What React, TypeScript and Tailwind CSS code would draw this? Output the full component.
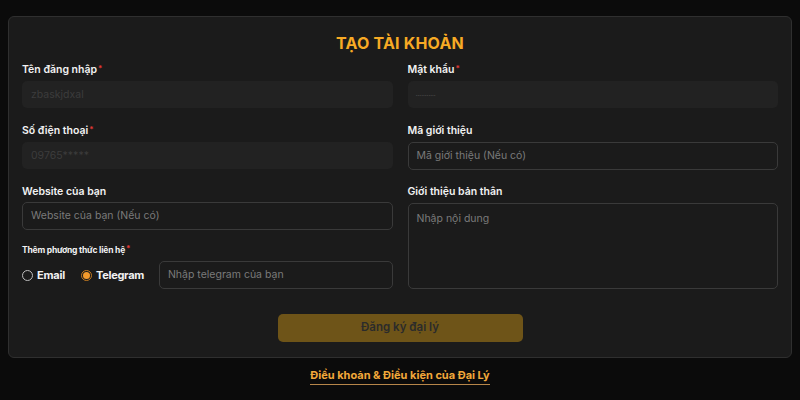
import React from "react";

const Req = () => <span className="text-[#e53935] text-[8px] align-top relative -top-[2px] ml-[1px]">*</span>;

function Label({ children, req, small, mb = 4 }: { children: React.ReactNode; req?: boolean; small?: boolean; mb?: number }) {
  return (
    <div
      className={`${small ? "text-[8.5px] tracking-[-0.2px] font-bold h-[14px] leading-[14px]" : "text-[10.5px] font-semibold h-[14px] leading-[14px]"} text-[#f2f2f2] ${mb === 3 ? "mb-[3px]" : "mb-[4px]"}`}
    >
      {children}
      {req && <Req />}
    </div>
  );
}

function Disabled({ text }: { text: string }) {
  return (
    <div className="h-[27px] rounded-[5px] bg-[#222222] flex items-center px-[9px] text-[10.5px] text-[#3c3c3c]">
      {text}
    </div>
  );
}

function Input({ placeholder }: { placeholder: string }) {
  return (
    <div className="h-[28px] rounded-[5px] border border-[#3a3a3a] bg-[#1b1b1b] flex items-center px-[8px] text-[10.5px] text-[#7a7a7a]">
      {placeholder}
    </div>
  );
}

export default function App() {
  return (
    <div className="w-[800px] h-[400px] bg-[#0b0b0b] pt-[16px] px-[8px] overflow-hidden" style={{ fontFamily: "Inter, 'Open Sans', sans-serif" }}>
      <div className="rounded-[6px] border border-[#2f2f2f] bg-[#1b1b1b] px-[13px] pt-[16px] pb-[15px]">
        <div className="text-center text-[16px] leading-[20px] font-bold text-[#f7aa24] mb-[10px] tracking-[0.2px]">TẠO TÀI KHOẢN</div>
        <div className="grid grid-cols-2 gap-x-[15px]">
          <div className="flex flex-col">
            <Label req>Tên đăng nhập</Label>
            <Disabled text="zbaskjdxal" />
            <div className="h-[16px]" />
            <Label req>Số điện thoại</Label>
            <Disabled text="09765*****" />
            <div className="h-[16px]" />
            <Label mb={3}>Website của bạn</Label>
            <Input placeholder="Website của bạn (Nếu có)" />
            <div className="h-[13px]" />
            <Label req small>Thêm phương thức liên hệ</Label>
            <div className="flex items-center h-[28px]">
              <div className="flex items-center gap-[4px]">
                <span className="w-[11px] h-[11px] rounded-full border border-[#bdbdbd]" />
                <span className="text-[11px] tracking-[-0.2px] font-bold text-[#f2f2f2]">Email</span>
              </div>
              <div className="flex items-center gap-[4px] ml-[16px]">
                <span className="w-[11px] h-[11px] rounded-full border border-[#c47a20] flex items-center justify-center">
                  <span className="w-[7px] h-[7px] rounded-full bg-[#f39a2c]" />
                </span>
                <span className="text-[11px] tracking-[-0.3px] font-bold text-[#f2f2f2]">Telegram</span>
              </div>
              <div className="ml-[15px] flex-1">
                <Input placeholder="Nhập telegram của bạn" />
              </div>
            </div>
          </div>
          <div className="flex flex-col">
            <Label req>Mật khẩu</Label>
            <div className="h-[27px] rounded-[5px] bg-[#222222] flex items-center px-[8px] text-[8px] tracking-[-0.5px] text-[#4a4a4a]">
              ···········
            </div>
            <div className="h-[16px]" />
            <Label>Mã giới thiệu</Label>
            <Input placeholder="Mã giới thiệu (Nếu có)" />
            <div className="h-[15px]" />
            <Label>Giới thiệu bản thân</Label>
            <div className="h-[86px] rounded-[5px] border border-[#3a3a3a] bg-[#1b1b1b] px-[8px] pt-[7px] text-[10.5px] text-[#7a7a7a]">
              Nhập nội dung
            </div>
          </div>
        </div>
        <div className="flex justify-center mt-[25px]">
          <div className="w-[245px] h-[28px] rounded-[5px] bg-[#6e5418] flex items-center justify-center text-[11.5px] font-semibold text-[#2b2b2b]">
            Đăng ký đại lý
          </div>
        </div>
      </div>
      <div className="flex justify-center mt-[10px]">
        <span className="text-[11px] font-bold text-[#f2a83a] border-b border-[#b7864a] leading-[15px] pb-[1px]">
          Điều khoản &amp; Điều kiện của Đại Lý
        </span>
      </div>
    </div>
  );
}
